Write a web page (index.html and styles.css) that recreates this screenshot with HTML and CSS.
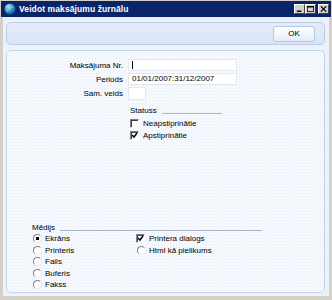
FILE: index.html
```html
<!DOCTYPE html>
<html>
    <head>
        <link rel="stylesheet" href="styles.css">
    </head>
    <body>
    <div class="window">
        <div class="titlebar">
            <svg class="app-icon" width="12" height="12" viewBox="0 0 12 12">
                <defs>
                    <radialGradient id="glb" cx="0.35" cy="0.3" r="0.8">
                        <stop offset="0" stop-color="#bfe6ff"/>
                        <stop offset="0.5" stop-color="#3a8fd8"/>
                        <stop offset="1" stop-color="#0c4a8c"/>
                    </radialGradient>
                </defs>
                <circle cx="6" cy="6" r="5.5" fill="url(#glb)"/>
                <path d="M3 8.5 C5 6.5 6 5 8.5 3.5" stroke="#7fd46a" stroke-width="1.6" fill="none"/>
            </svg>
            <span class="title">Veidot maksājumu žurnālu</span>
            <div class="wbtns">
                <span class="wbtn"><svg width="9" height="8" viewBox="0 0 9 8"><rect x="1" y="6" width="6" height="2" fill="#000"/></svg></span>
                <span class="wbtn"><svg width="9" height="8" viewBox="0 0 9 8"><rect x="0.5" y="0.5" width="8" height="7" fill="none" stroke="#000"/><rect x="0" y="0" width="9" height="2" fill="#000"/></svg></span>
                <span class="wbtn close"><svg width="9" height="8" viewBox="0 0 9 8"><path d="M1 0.5 L8 7.5 M8 0.5 L1 7.5" stroke="#000" stroke-width="1.6"/></svg></span>
            </div>
        </div>
        <div class="client">
            <div class="toolbar">
                <button class="ok-btn">OK</button>
            </div>
            <div class="panel">
                <div class="fields">
                    <label class="field-label">Maksājuma Nr.</label>
                    <span class="field-input wide"><span class="caret"></span></span>
                    <label class="field-label">Periods</label>
                    <span class="field-input wide">01/01/2007:31/12/2007</span>
                    <label class="field-label">Sam. veids</label>
                    <span class="field-input short"></span>
                </div>

                <div class="group status-group">
                    <div class="group-head"><span>Statuss</span><span class="rule"></span></div>
                    <div class="opt"><span class="check"></span>Neapstiprinātie</div>
                    <div class="opt"><span class="check on"></span>Apstiprinātie</div>
                </div>

                <div class="group media-group">
                    <div class="group-head"><span>Mēdijs</span><span class="rule"></span></div>
                    <div class="media-cols">
                        <div class="col">
                            <div class="opt"><span class="radio on"></span>Ekrāns</div>
                            <div class="opt"><span class="radio"></span>Printeris</div>
                            <div class="opt"><span class="radio"></span>Fails</div>
                            <div class="opt"><span class="radio"></span>Buferis</div>
                            <div class="opt"><span class="radio"></span>Fakss</div>
                        </div>
                        <div class="col">
                            <div class="opt"><span class="check on"></span>Printera dialogs</div>
                            <div class="opt"><span class="radio"></span>Html kā pielikums</div>
                        </div>
                    </div>
                </div>
            </div>
        </div>
    </div>
    </body>
</html>
```

FILE: styles.css
```css
body {
    margin: 0;
    font-family: "Liberation Sans", Arial, sans-serif;
    font-size: 8px;
    color: #000;
}
.window {
    width: 332px;
    height: 300px;
    box-sizing: border-box;
    padding: 1px 3px 4px 3px;
    background: #d4d0c8;
    display: flex;
    flex-direction: column;
}
.titlebar {
    height: 16px;
    margin: 0 -2px;
    padding: 0 2px 0 3px;
    background: #0a246a;
    display: flex;
    align-items: center;
    color: #fff;
}
.app-icon {
    flex: none;
}
.title {
    margin-left: 3px;
    font-weight: bold;
    font-size: 8.5px;
    letter-spacing: 0.1px;
}
.wbtns {
    margin-left: auto;
    display: flex;
}
.wbtn {
    width: 11px;
    height: 10px;
    box-sizing: border-box;
    background: #d4d0c8;
    border: 1px solid;
    border-color: #fff #404040 #404040 #fff;
    display: flex;
    align-items: center;
    justify-content: center;
}
.wbtn svg {
    width: 7px;
    height: 6px;
}
.wbtn.close {
    margin-left: 2px;
}
.client {
    flex: 1;
    background: #edf2fa;
    display: flex;
    flex-direction: column;
    padding: 5px 4px 3px 3px;
    gap: 5px;
}
.toolbar {
    height: 23px;
    box-sizing: border-box;
    border: 1px solid #b9cde8;
    border-radius: 5px;
    background: linear-gradient(#e3ecf9, #d9e5f6);
    display: flex;
    align-items: center;
    justify-content: flex-end;
    padding-right: 9px;
}
.ok-btn {
    width: 42px;
    height: 16px;
    border: 1px solid #b4c6e0;
    border-radius: 3px;
    background: linear-gradient(#ffffff, #e6edf8);
    font-family: "Liberation Sans", Arial, sans-serif;
    font-size: 8px;
    padding: 0;
    color: #000;
}
.panel {
    flex: 1;
    box-sizing: border-box;
    border: 1px solid #c3d5ee;
    border-radius: 5px;
    background-color: #f5f8fd;
    background-image: radial-gradient(#e7edf7 0.6px, transparent 0.8px);
    background-size: 3px 3px;
    display: flex;
    flex-direction: column;
}
.fields {
    margin-top: 8px;
    display: grid;
    grid-template-columns: 116px auto;
    column-gap: 5px;
    row-gap: 2px;
    align-items: center;
}
.field-label {
    text-align: right;
}
.field-input {
    height: 12px;
    box-sizing: border-box;
    background: #fff;
    border: 1px solid #e3e9f2;
    padding-left: 3px;
    line-height: 10px;
    display: flex;
    align-items: center;
}
.field-input.wide {
    width: 109px;
}
.field-input.short {
    width: 18px;
    height: 13px;
}
.caret {
    width: 1px;
    height: 8px;
    background: #000;
}
.group-head {
    display: flex;
    align-items: flex-end;
    height: 9px;
    line-height: 9px;
}
.rule {
    flex: 1;
    margin-left: 5px;
    margin-bottom: 1px;
    border-top: 1px solid #a9b4c4;
}
.status-group {
    margin-left: 123px;
    width: 92px;
    margin-top: 6px;
}
.status-group .group-head {
    margin-bottom: 2px;
}
.opt {
    height: 12px;
    display: flex;
    align-items: center;
    white-space: nowrap;
}
.check {
    width: 9px;
    height: 9px;
    box-sizing: border-box;
    border: 1px solid;
    border-color: #808080 #fff #fff #808080;
    box-shadow: inset 1px 1px 0 #404040;
    background: #fff;
    margin-right: 4px;
    flex: none;
}
.check.on {
    background: #fff url("data:image/svg+xml,%3Csvg xmlns='http://www.w3.org/2000/svg' width='7' height='7'%3E%3Cpath d='M1 3 L3 5 L6 1' stroke='%23000' stroke-width='1.5' fill='none'/%3E%3C/svg%3E") no-repeat 0 0;
}
.media-group {
    margin-top: 82px;
    margin-left: 25px;
    width: 230px;
}
.media-group .group-head {
    margin-bottom: 1px;
}
.media-group .opt {
    height: 11.5px;
}
.media-cols {
    display: flex;
}
.media-cols .col:first-child {
    width: 104px;
}
.radio {
    width: 9px;
    height: 9px;
    box-sizing: border-box;
    border-radius: 50%;
    border: 1px solid;
    border-color: #808080 #e8e8e8 #e8e8e8 #808080;
    background: #fff;
    margin-left: 1px;
    margin-right: 3px;
    flex: none;
}
.radio.on {
    background: radial-gradient(circle, #000 1.6px, #fff 2px);
}
```
